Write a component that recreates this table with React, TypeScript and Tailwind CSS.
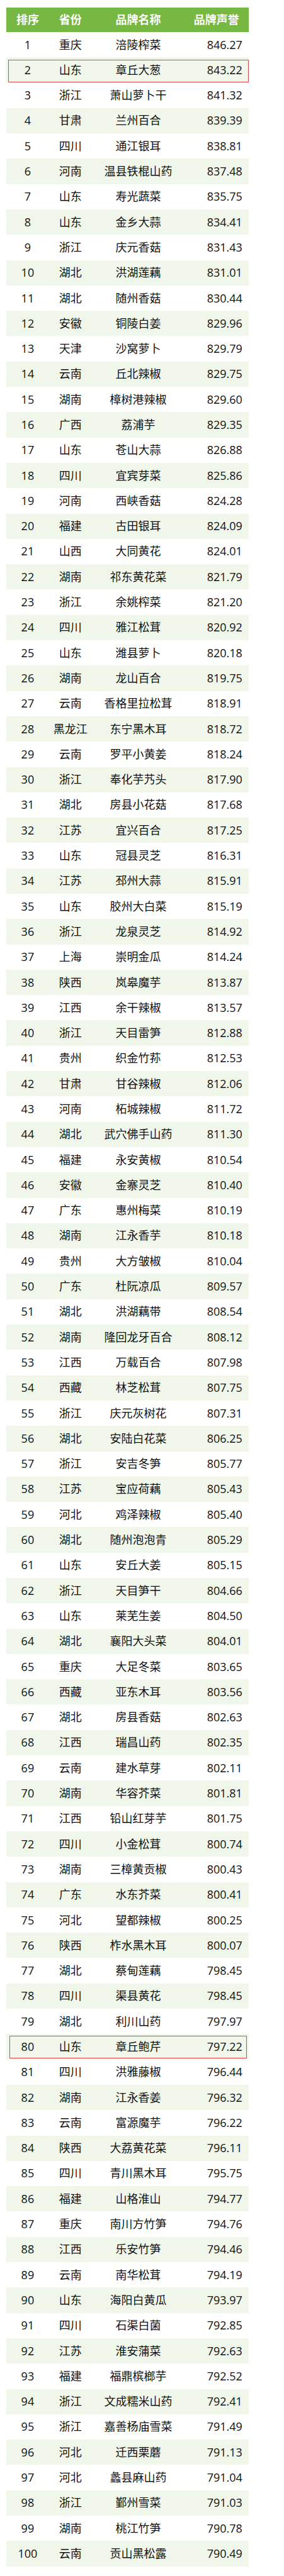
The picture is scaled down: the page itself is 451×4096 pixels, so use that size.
import React from 'react';

type Row = [string, string, string];

// province, brand, score — index + 1 is the rank
const rows: Row[] = [
  ['重庆', '涪陵榨菜', '846.27'],
  ['山东', '章丘大葱', '843.22'],
  ['浙江', '萧山萝卜干', '841.32'],
  ['甘肃', '兰州百合', '839.39'],
  ['四川', '通江银耳', '838.81'],
  ['河南', '温县铁棍山药', '837.48'],
  ['山东', '寿光蔬菜', '835.75'],
  ['山东', '金乡大蒜', '834.41'],
  ['浙江', '庆元香菇', '831.43'],
  ['湖北', '洪湖莲藕', '831.01'],
  ['湖北', '随州香菇', '830.44'],
  ['安徽', '铜陵白姜', '829.96'],
  ['天津', '沙窝萝卜', '829.79'],
  ['云南', '丘北辣椒', '829.75'],
  ['湖南', '樟树港辣椒', '829.60'],
  ['广西', '荔浦芋', '829.35'],
  ['山东', '苍山大蒜', '826.88'],
  ['四川', '宜宾芽菜', '825.86'],
  ['河南', '西峡香菇', '824.28'],
  ['福建', '古田银耳', '824.09'],
  ['山西', '大同黄花', '824.01'],
  ['湖南', '祁东黄花菜', '821.79'],
  ['浙江', '余姚榨菜', '821.20'],
  ['四川', '雅江松茸', '820.92'],
  ['山东', '潍县萝卜', '820.18'],
  ['湖南', '龙山百合', '819.75'],
  ['云南', '香格里拉松茸', '818.91'],
  ['黑龙江', '东宁黑木耳', '818.72'],
  ['云南', '罗平小黄姜', '818.24'],
  ['浙江', '奉化芋艿头', '817.90'],
  ['湖北', '房县小花菇', '817.68'],
  ['江苏', '宜兴百合', '817.25'],
  ['山东', '冠县灵芝', '816.31'],
  ['江苏', '邳州大蒜', '815.91'],
  ['山东', '胶州大白菜', '815.19'],
  ['浙江', '龙泉灵芝', '814.92'],
  ['上海', '崇明金瓜', '814.24'],
  ['陕西', '岚皋魔芋', '813.87'],
  ['江西', '余干辣椒', '813.57'],
  ['浙江', '天目雷笋', '812.88'],
  ['贵州', '织金竹荪', '812.53'],
  ['甘肃', '甘谷辣椒', '812.06'],
  ['河南', '柘城辣椒', '811.72'],
  ['湖北', '武穴佛手山药', '811.30'],
  ['福建', '永安黄椒', '810.54'],
  ['安徽', '金寨灵芝', '810.40'],
  ['广东', '惠州梅菜', '810.19'],
  ['湖南', '江永香芋', '810.18'],
  ['贵州', '大方皱椒', '810.04'],
  ['广东', '杜阮凉瓜', '809.57'],
  ['湖北', '洪湖藕带', '808.54'],
  ['湖南', '隆回龙牙百合', '808.12'],
  ['江西', '万载百合', '807.98'],
  ['西藏', '林芝松茸', '807.75'],
  ['浙江', '庆元灰树花', '807.31'],
  ['湖北', '安陆白花菜', '806.25'],
  ['浙江', '安吉冬笋', '805.77'],
  ['江苏', '宝应荷藕', '805.43'],
  ['河北', '鸡泽辣椒', '805.40'],
  ['湖北', '随州泡泡青', '805.29'],
  ['山东', '安丘大姜', '805.15'],
  ['浙江', '天目笋干', '804.66'],
  ['山东', '莱芜生姜', '804.50'],
  ['湖北', '襄阳大头菜', '804.01'],
  ['重庆', '大足冬菜', '803.65'],
  ['西藏', '亚东木耳', '803.56'],
  ['湖北', '房县香菇', '802.63'],
  ['江西', '瑞昌山药', '802.35'],
  ['云南', '建水草芽', '802.11'],
  ['湖南', '华容芥菜', '801.81'],
  ['江西', '铅山红芽芋', '801.75'],
  ['四川', '小金松茸', '800.74'],
  ['湖南', '三樟黄贡椒', '800.43'],
  ['广东', '水东芥菜', '800.41'],
  ['河北', '望都辣椒', '800.25'],
  ['陕西', '柞水黑木耳', '800.07'],
  ['湖北', '蔡甸莲藕', '798.45'],
  ['四川', '渠县黄花', '798.45'],
  ['湖北', '利川山药', '797.97'],
  ['山东', '章丘鲍芹', '797.22'],
  ['四川', '洪雅藤椒', '796.44'],
  ['湖南', '江永香姜', '796.32'],
  ['云南', '富源魔芋', '796.22'],
  ['陕西', '大荔黄花菜', '796.11'],
  ['四川', '青川黑木耳', '795.75'],
  ['福建', '山格淮山', '794.77'],
  ['重庆', '南川方竹笋', '794.76'],
  ['江西', '乐安竹笋', '794.46'],
  ['云南', '南华松茸', '794.19'],
  ['山东', '海阳白黄瓜', '793.97'],
  ['四川', '石渠白菌', '792.85'],
  ['江苏', '淮安蒲菜', '792.63'],
  ['福建', '福鼎槟榔芋', '792.52'],
  ['浙江', '文成糯米山药', '792.41'],
  ['浙江', '嘉善杨庙雪菜', '791.49'],
  ['河北', '迁西栗蘑', '791.13'],
  ['河北', '蠡县麻山药', '791.04'],
  ['浙江', '鄞州雪菜', '791.03'],
  ['湖南', '桃江竹笋', '790.78'],
  ['云南', '贡山黑松露', '790.49'],
];

export default function App() {
  return (
    <div
      className="w-[451px] bg-white pt-[11.6px] pb-[14px] pl-[10.3px] text-[18px] text-[#111]"
      style={{ fontFamily: '"Open Sans", "Noto Sans CJK SC", sans-serif' }}
    >
      <div className="w-[384.4px]">
        {/* Header */}
        <div className="flex h-[39.3px] items-center bg-[#77b843] font-bold text-white">
          <div className="w-[67.2px] text-center">排序</div>
          <div className="w-[68.7px] text-center">省份</div>
          <div className="w-[146.7px] text-center">品牌名称</div>
          <div className="flex-1 text-center">品牌声誉</div>
        </div>

        {/* Body */}
        {rows.map(([province, brand, score], i) => {
          const rank = i + 1;
          return (
            <div
              key={rank}
              className={`relative flex h-[40.31px] items-center ${rank % 2 === 0 ? 'bg-[#f0f7ea]' : 'bg-white'}`}
            >
              <div className="w-[67.2px] text-center">{rank}</div>
              <div className="w-[68.7px] text-center">{province}</div>
              <div className="w-[146.7px] text-center">{brand}</div>
              <div className="flex-1 pr-[9.8px] text-right">{score}</div>
              {rank === 2 && (
                <div className="absolute top-[3.6px] right-0 bottom-0 left-[3px] border-[1.6px] border-[#e3444b]" />
              )}
              {rank === 80 && (
                <div className="absolute top-[2.2px] right-[2.4px] bottom-[1.3px] left-[4.6px] border-[1.6px] border-[#e3444b]" />
              )}
            </div>
          );
        })}
      </div>
    </div>
  );
}
